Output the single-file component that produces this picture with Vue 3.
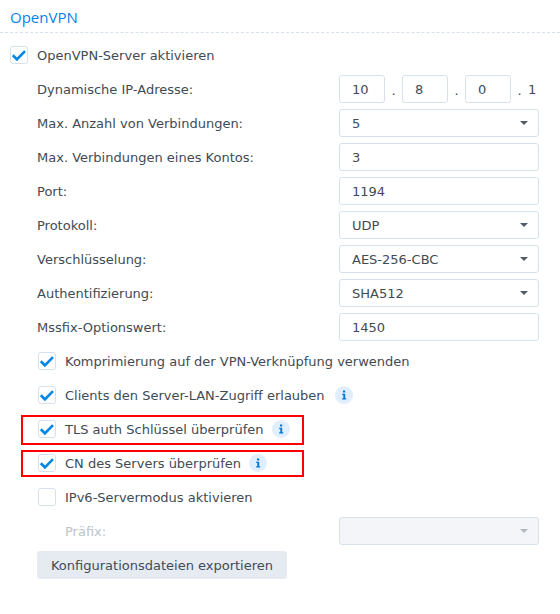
<script setup>
const fields = [
  { label: "Max. Anzahl von Verbindungen:", value: "5", select: true },
  { label: "Max. Verbindungen eines Kontos:", value: "3" },
  { label: "Port:", value: "1194" },
  { label: "Protokoll:", value: "UDP", select: true },
  { label: "Verschlüsselung:", value: "AES-256-CBC", select: true },
  { label: "Authentifizierung:", value: "SHA512", select: true },
  { label: "Mssfix-Optionswert:", value: "1450" },
];

const options = [
  { label: "Komprimierung auf der VPN-Verknüpfung verwenden", checked: true },
  { label: "Clients den Server-LAN-Zugriff erlauben", checked: true, info: true },
  { label: "TLS auth Schlüssel überprüfen", checked: true, info: true, mark: "mark-tls" },
  { label: "CN des Servers überprüfen", checked: true, info: true, mark: "mark-cn" },
  { label: "IPv6-Servermodus aktivieren", checked: false },
];

const octets = ["10", "8", "0"];
</script>

<template>
  <div class="page">
    <h4 class="title">OpenVPN</h4>
    <div class="content">
      <div class="row check-row">
        <span class="box">
          <svg viewBox="0 0 18 18" width="18" height="18"><path d="M2.8 9.3 6.9 13.3 15 5.2" /></svg>
        </span>
        <span>OpenVPN-Server aktivieren</span>
      </div>

      <div class="indent">
        <div class="row">
          <span class="label">Dynamische IP-Adresse:</span>
          <div class="ip">
            <template v-for="o in octets" :key="o">
              <span class="field small">{{ o }}</span>
              <span class="dot">.</span>
            </template>
            <span class="last">1</span>
          </div>
        </div>

        <div class="row" v-for="f in fields" :key="f.label">
          <span class="label">{{ f.label }}</span>
          <span class="field" :class="{ select: f.select }">{{ f.value }}</span>
        </div>

        <div class="row check-row sub" v-for="c in options" :key="c.label">
          <span class="box">
            <svg v-if="c.checked" viewBox="0 0 18 18" width="18" height="18"><path d="M2.8 9.3 6.9 13.3 15 5.2" /></svg>
          </span>
          <span>{{ c.label }}</span>
          <span class="info" :class="{ tight: c.mark }" v-if="c.info">
            <svg viewBox="0 0 18 18" width="18" height="18"><path d="M8 4.6h2.2v2H8zM7.2 7.8h3v4.4h1v1.2H7.2v-1.2h1.1V9H7.2z" /></svg>
          </span>
          <span class="mark" :class="c.mark" v-if="c.mark"></span>
        </div>

        <div class="row">
          <span class="label disabled">Präfix:</span>
          <span class="field select off"></span>
        </div>

        <div class="row">
          <button class="export">Konfigurationsdateien exportieren</button>
        </div>
      </div>
    </div>
  </div>
</template>

<style>
body {
  background: #fff;
}
</style>

<style scoped>
.page {
  width: 560px;
  height: 614px;
  overflow: hidden;
  font-family: "DejaVu Sans", Verdana, sans-serif;
  font-size: 13px;
  color: #414b55;
}
.title {
  margin: 0;
  height: 33px;
  box-sizing: border-box;
  padding: 7px 0 0 10px;
  font-family: "Open Sans", sans-serif;
  font-size: 15px;
  line-height: 20px;
  font-weight: 400;
  color: #0a7fea;
  border-bottom: 1px dashed #d7e1eb;
}
.content {
  padding: 8px 0 0 10px;
}
.indent {
  padding-left: 27px;
}
.row {
  position: relative;
  display: flex;
  align-items: center;
  height: 28px;
  margin-bottom: 6px;
}
.label {
  width: 302px;
}
.disabled {
  padding-left: 28px;
  width: 274px;
  color: #bcc3ca;
}
.field {
  box-sizing: border-box;
  width: 200px;
  height: 28px;
  line-height: 28px;
  padding-left: 12px;
  border: 1px solid #d7e1eb;
  border-radius: 3px;
  background: #fff;
  position: relative;
}
.field.small {
  width: 46px;
}
.select::after {
  content: "";
  position: absolute;
  right: 10px;
  top: 11px;
  border-left: 4px solid transparent;
  border-right: 4px solid transparent;
  border-top: 4px solid #525b66;
}
.off {
  background: #f4f5f9;
}
.off::after {
  border-top-color: #b4b9bf;
}
.ip {
  display: flex;
  align-items: center;
}
.dot {
  width: 17px;
  text-align: center;
  padding-top: 3px;
}
.last {
  margin-left: -3px;
  padding-left: 3px;
}
.check-row {
  gap: 9px;
}
.box {
  box-sizing: border-box;
  flex: none;
  width: 18px;
  height: 18px;
  border: 1px solid #d7e1eb;
  border-radius: 3px;
  display: flex;
  align-items: center;
  justify-content: center;
}
.sub .box {
  margin-left: 1px;
}
.box svg {
  flex: none;
}
.box svg path {
  fill: none;
  stroke: #0086e5;
  stroke-width: 2.6;
}
.info {
  flex: none;
  width: 18px;
  height: 18px;
  margin-left: 1px;
  border-radius: 50%;
  background: #e0eefd;
}
.info.tight {
  margin-left: -1px;
}
.info svg {
  display: block;
}
.info svg path {
  fill: #0078d8;
}
.mark {
  position: absolute;
  box-sizing: border-box;
  left: -16px;
  width: 283px;
  border: 2px solid #ff0000;
}
.mark-tls {
  top: 0;
  height: 30px;
}
.mark-cn {
  top: 1px;
  height: 27px;
}
.export {
  box-sizing: border-box;
  width: 250px;
  height: 28px;
  padding: 0;
  border: 0;
  border-radius: 3px;
  background: #e6ebf2;
  color: #414b55;
  font: inherit;
}
</style>
